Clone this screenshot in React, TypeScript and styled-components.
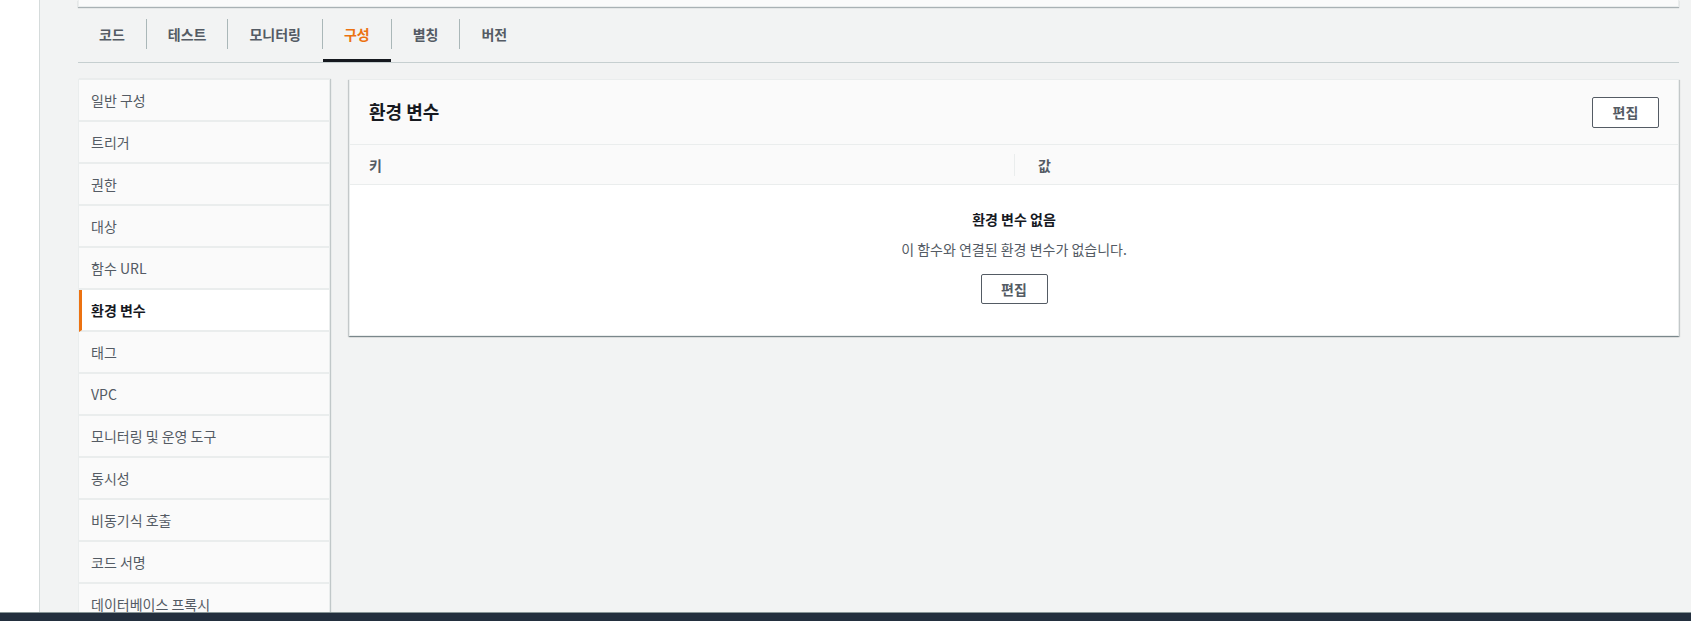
import React from "react";
import styled, { createGlobalStyle } from "styled-components";

const GlobalStyle = createGlobalStyle`
  html, body {
    margin: 0;
    padding: 0;
    height: 621px;
    overflow: hidden;
    background: #f2f3f3;
    font-family: "Noto Sans CJK KR", "Noto Sans", sans-serif;
    -webkit-font-smoothing: antialiased;
  }
  * { box-sizing: border-box; }
`;

const Shell = styled.div`
  height: 621px;
  display: flex;
  flex-direction: column;
  overflow: hidden;
`;

const Body = styled.div`
  flex: 1;
  display: flex;
  min-height: 0;
  overflow: hidden;
`;

const Rail = styled.div`
  width: 40px;
  flex: none;
  background: #ffffff;
  border-right: 1px solid #d5dbdb;
`;

const Content = styled.main`
  flex: 1;
  min-width: 0;
  padding: 0 12px 0 38px;
  background: #f2f3f3;
  display: flex;
  flex-direction: column;
  overflow: hidden;
`;

const TopPanelEdge = styled.div`
  flex: none;
  height: 7px;
  background: #fafafa;
  border: 1px solid #eaeded;
  border-top: none;
  box-shadow: 0 1px 1px 0 rgba(0, 28, 36, 0.3);
`;

const TabBar = styled.nav`
  flex: none;
  margin-top: 12px;
  display: flex;
  align-items: flex-start;
  border-bottom: 1px solid #c6cfd0;
`;

const Tab = styled.div<{ $active?: boolean }>`
  height: 43px;
  padding: 0 21px;
  border-bottom: 3px solid ${(p) => (p.$active ? "#16191f" : "transparent")};
  font-size: 14px;
  font-weight: 700;
  line-height: 31px;
  color: ${(p) => (p.$active ? "#ec7211" : "#545b64")};
  white-space: nowrap;
`;

const TabDivider = styled.span`
  width: 1px;
  height: 30px;
  background: #aab7b8;
  flex: none;
`;

const Layout = styled.div`
  flex: none;
  margin-top: 16px;
  display: grid;
  grid-template-columns: 252px 1fr;
  column-gap: 19px;
  align-items: start;
`;

const SideNav = styled.ul`
  margin: 0;
  padding: 0;
  list-style: none;
  background: #fafafa;
  border: 1px solid #eaeded;
  box-shadow: 1px 0 1px 0 rgba(0, 28, 36, 0.2);
`;

const SideItem = styled.li<{ $active?: boolean }>`
  height: 42px;
  display: flex;
  align-items: center;
  padding-left: ${(p) => (p.$active ? "9px" : "12px")};
  border-left: ${(p) => (p.$active ? "3px solid #ec7211" : "none")};
  border-bottom: 2px solid #eaeded;
  background: ${(p) => (p.$active ? "#ffffff" : "#fafafa")};
  font-size: 14px;
  font-weight: ${(p) => (p.$active ? 700 : 400)};
  color: ${(p) => (p.$active ? "#16191f" : "#545b64")};
  white-space: nowrap;
`;

const Panel = styled.section`
  background: #ffffff;
  border: 1px solid #eaeded;
  box-shadow: 0 1px 1px 0 rgba(0, 28, 36, 0.3), 1px 1px 1px 0 rgba(0, 28, 36, 0.15),
    -1px 1px 1px 0 rgba(0, 28, 36, 0.15);
`;

const PanelHeader = styled.header`
  height: 65px;
  padding: 0 19px;
  display: flex;
  align-items: center;
  justify-content: space-between;
  background: #fafafa;
  border-bottom: 1px solid #eaeded;
`;

const PanelTitle = styled.h2`
  margin: 0 0 3px;
  font-size: 18px;
  font-weight: 700;
  color: #16191f;
`;

const Button = styled.button`
  width: 67px;
  height: 31px;
  padding: 0;
  background: #ffffff;
  border: 1px solid #545b64;
  border-radius: 2px;
  font-family: inherit;
  font-size: 14px;
  font-weight: 700;
  color: #545b64;
  cursor: pointer;
`;

const TableHead = styled.div`
  height: 40px;
  display: grid;
  grid-template-columns: 1fr 1fr;
  align-items: center;
  background: #fafafa;
  border-bottom: 1px solid #eaeded;
`;

const HeadCell = styled.div<{ $divider?: boolean }>`
  height: 22px;
  display: flex;
  align-items: center;
  padding-left: ${(p) => (p.$divider ? "23px" : "19px")};
  border-left: ${(p) => (p.$divider ? "1px solid #eaeded" : "none")};
  font-size: 14px;
  font-weight: 700;
  color: #545b64;
`;

const EmptyState = styled.div`
  padding: 19px 0 31px;
  display: flex;
  flex-direction: column;
  align-items: center;
`;

const EmptyTitle = styled.div`
  font-size: 14px;
  font-weight: 700;
  line-height: 30px;
  color: #16191f;
`;

const EmptyText = styled.div`
  font-size: 14px;
  line-height: 30px;
  color: #545b64;
`;

const EmptyButton = styled(Button)`
  height: 30px;
  margin-top: 10px;
`;

const Footer = styled.footer`
  height: 9px;
  flex: none;
  background: #232f3e;
  border-top: 1px solid #879596;
`;

const tabs = ["코드", "테스트", "모니터링", "구성", "별칭", "버전"];
const sideItems = [
  "일반 구성",
  "트리거",
  "권한",
  "대상",
  "함수 URL",
  "환경 변수",
  "태그",
  "VPC",
  "모니터링 및 운영 도구",
  "동시성",
  "비동기식 호출",
  "코드 서명",
  "데이터베이스 프록시",
];

export default function App() {
  return (
    <>
      <GlobalStyle />
      <Shell>
        <Body>
          <Rail />
          <Content>
            <TopPanelEdge />
            <TabBar>
              {tabs.map((t, i) => (
                <React.Fragment key={t}>
                  {i > 0 && <TabDivider />}
                  <Tab $active={t === "구성"}>{t}</Tab>
                </React.Fragment>
              ))}
            </TabBar>
            <Layout>
              <SideNav>
                {sideItems.map((s) => (
                  <SideItem key={s} $active={s === "환경 변수"}>
                    {s}
                  </SideItem>
                ))}
              </SideNav>
              <Panel>
                <PanelHeader>
                  <PanelTitle>환경 변수</PanelTitle>
                  <Button>편집</Button>
                </PanelHeader>
                <TableHead>
                  <HeadCell>키</HeadCell>
                  <HeadCell $divider>값</HeadCell>
                </TableHead>
                <EmptyState>
                  <EmptyTitle>환경 변수 없음</EmptyTitle>
                  <EmptyText>이 함수와 연결된 환경 변수가 없습니다.</EmptyText>
                  <EmptyButton>편집</EmptyButton>
                </EmptyState>
              </Panel>
            </Layout>
          </Content>
        </Body>
        <Footer />
      </Shell>
    </>
  );
}
